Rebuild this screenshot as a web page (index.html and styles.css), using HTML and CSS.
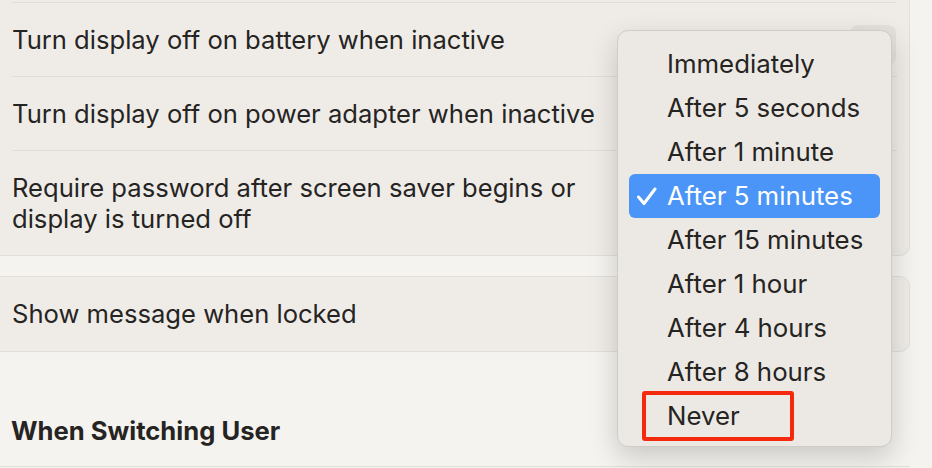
FILE: index.html
```html
<!DOCTYPE html>
<html lang="en">
  <head>
    <meta charset="UTF-8" />
    <meta name="viewport" content="width=device-width, initial-scale=1.0" />
    <title>Lock Screen</title>
    <link rel="stylesheet" href="styles.css">
  </head>
  <body>
    <div class="settings">
      <!-- Display / password card -->
      <div class="card card-top">
        <div class="row">Turn display off on battery when inactive</div>
        <div class="row">Turn display off on power adapter when inactive</div>
        <div class="row">Require password after screen saver begins or<br />display is turned off</div>
      </div>

      <div class="card">
        <div class="row row-first">Show message when locked</div>
      </div>

      <h3 class="section-title">When Switching User</h3>
      <div class="card card-next"></div>
    </div>

    <!-- popup button sitting under the open menu -->
    <div class="popup-button"></div>

    <ul class="menu">
      <li class="menu-item">Immediately</li>
      <li class="menu-item">After 5 seconds</li>
      <li class="menu-item">After 1 minute</li>
      <li class="menu-item selected">
        <svg class="check" width="22" height="20" viewBox="0 0 22 20">
          <polyline points="2.5,10 8,16.5 19,2" fill="none" stroke="#fff" stroke-width="3" stroke-linecap="round" stroke-linejoin="round" />
        </svg>After 5 minutes
      </li>
      <li class="menu-item">After 15 minutes</li>
      <li class="menu-item">After 1 hour</li>
      <li class="menu-item">After 4 hours</li>
      <li class="menu-item">After 8 hours</li>
      <li class="menu-item">Never<span class="callout"></span></li>
    </ul>
  </body>
</html>
```

FILE: styles.css
```css
body {
  font-family: Inter, "Noto Sans", sans-serif;
  background-color: #f5f3ef;
  color: #262422;
  margin: 0;
  padding: 0;
  height: 468px;
  overflow: hidden;
  position: relative;
}

.settings {
  width: 922px;
  margin-left: -12px;
}

.card {
  background-color: #efece8;
  border: 1px solid #e2dfda;
  border-radius: 10px;
  padding: 0 12px 0 23px;
}

.card-top {
  margin-top: -20px;
  padding-top: 22px;
  border-top: none;
}

.row {
  font-size: 25.6px;
  line-height: 31px;
  padding: 21px 0;
  border-top: 1px solid #e1ded9;
}

.row-first {
  border-top: none;
  padding: 21px 0 22px;
}

.card + .card {
  margin-top: 20px;
}

.section-title {
  font-size: 25.6px;
  line-height: 31px;
  font-weight: 700;
  margin: 63px 0 20px 23px;
}

.card-next {
  height: 0;
  border-bottom: none;
  border-radius: 10px 10px 0 0;
}

.popup-button {
  position: absolute;
  left: 850px;
  top: 25px;
  width: 46px;
  height: 40px;
  border-radius: 8px;
  background-color: #e4e1dc;
}

.menu {
  position: absolute;
  left: 617px;
  top: 30px;
  width: 275px;
  box-sizing: border-box;
  margin: 0;
  padding: 11px 11px 8px;
  list-style: none;
  background-color: #ece9e4;
  border: 1px solid #cfccc7;
  border-radius: 11px;
  box-shadow: 0 10px 28px rgba(0, 0, 0, 0.18);
}

.menu-item {
  position: relative;
  height: 44px;
  line-height: 44px;
  padding-left: 38px;
  font-size: 25.8px;
  border-radius: 6px;
}

.menu-item.selected {
  background-color: #4a95f7;
  color: #fff;
}

.check {
  position: absolute;
  left: 7px;
  top: 13px;
}

.callout {
  position: absolute;
  left: 13px;
  top: -3px;
  width: 152px;
  height: 50px;
  box-sizing: border-box;
  border: 4px solid #f52a0c;
  border-radius: 3px;
}
```
